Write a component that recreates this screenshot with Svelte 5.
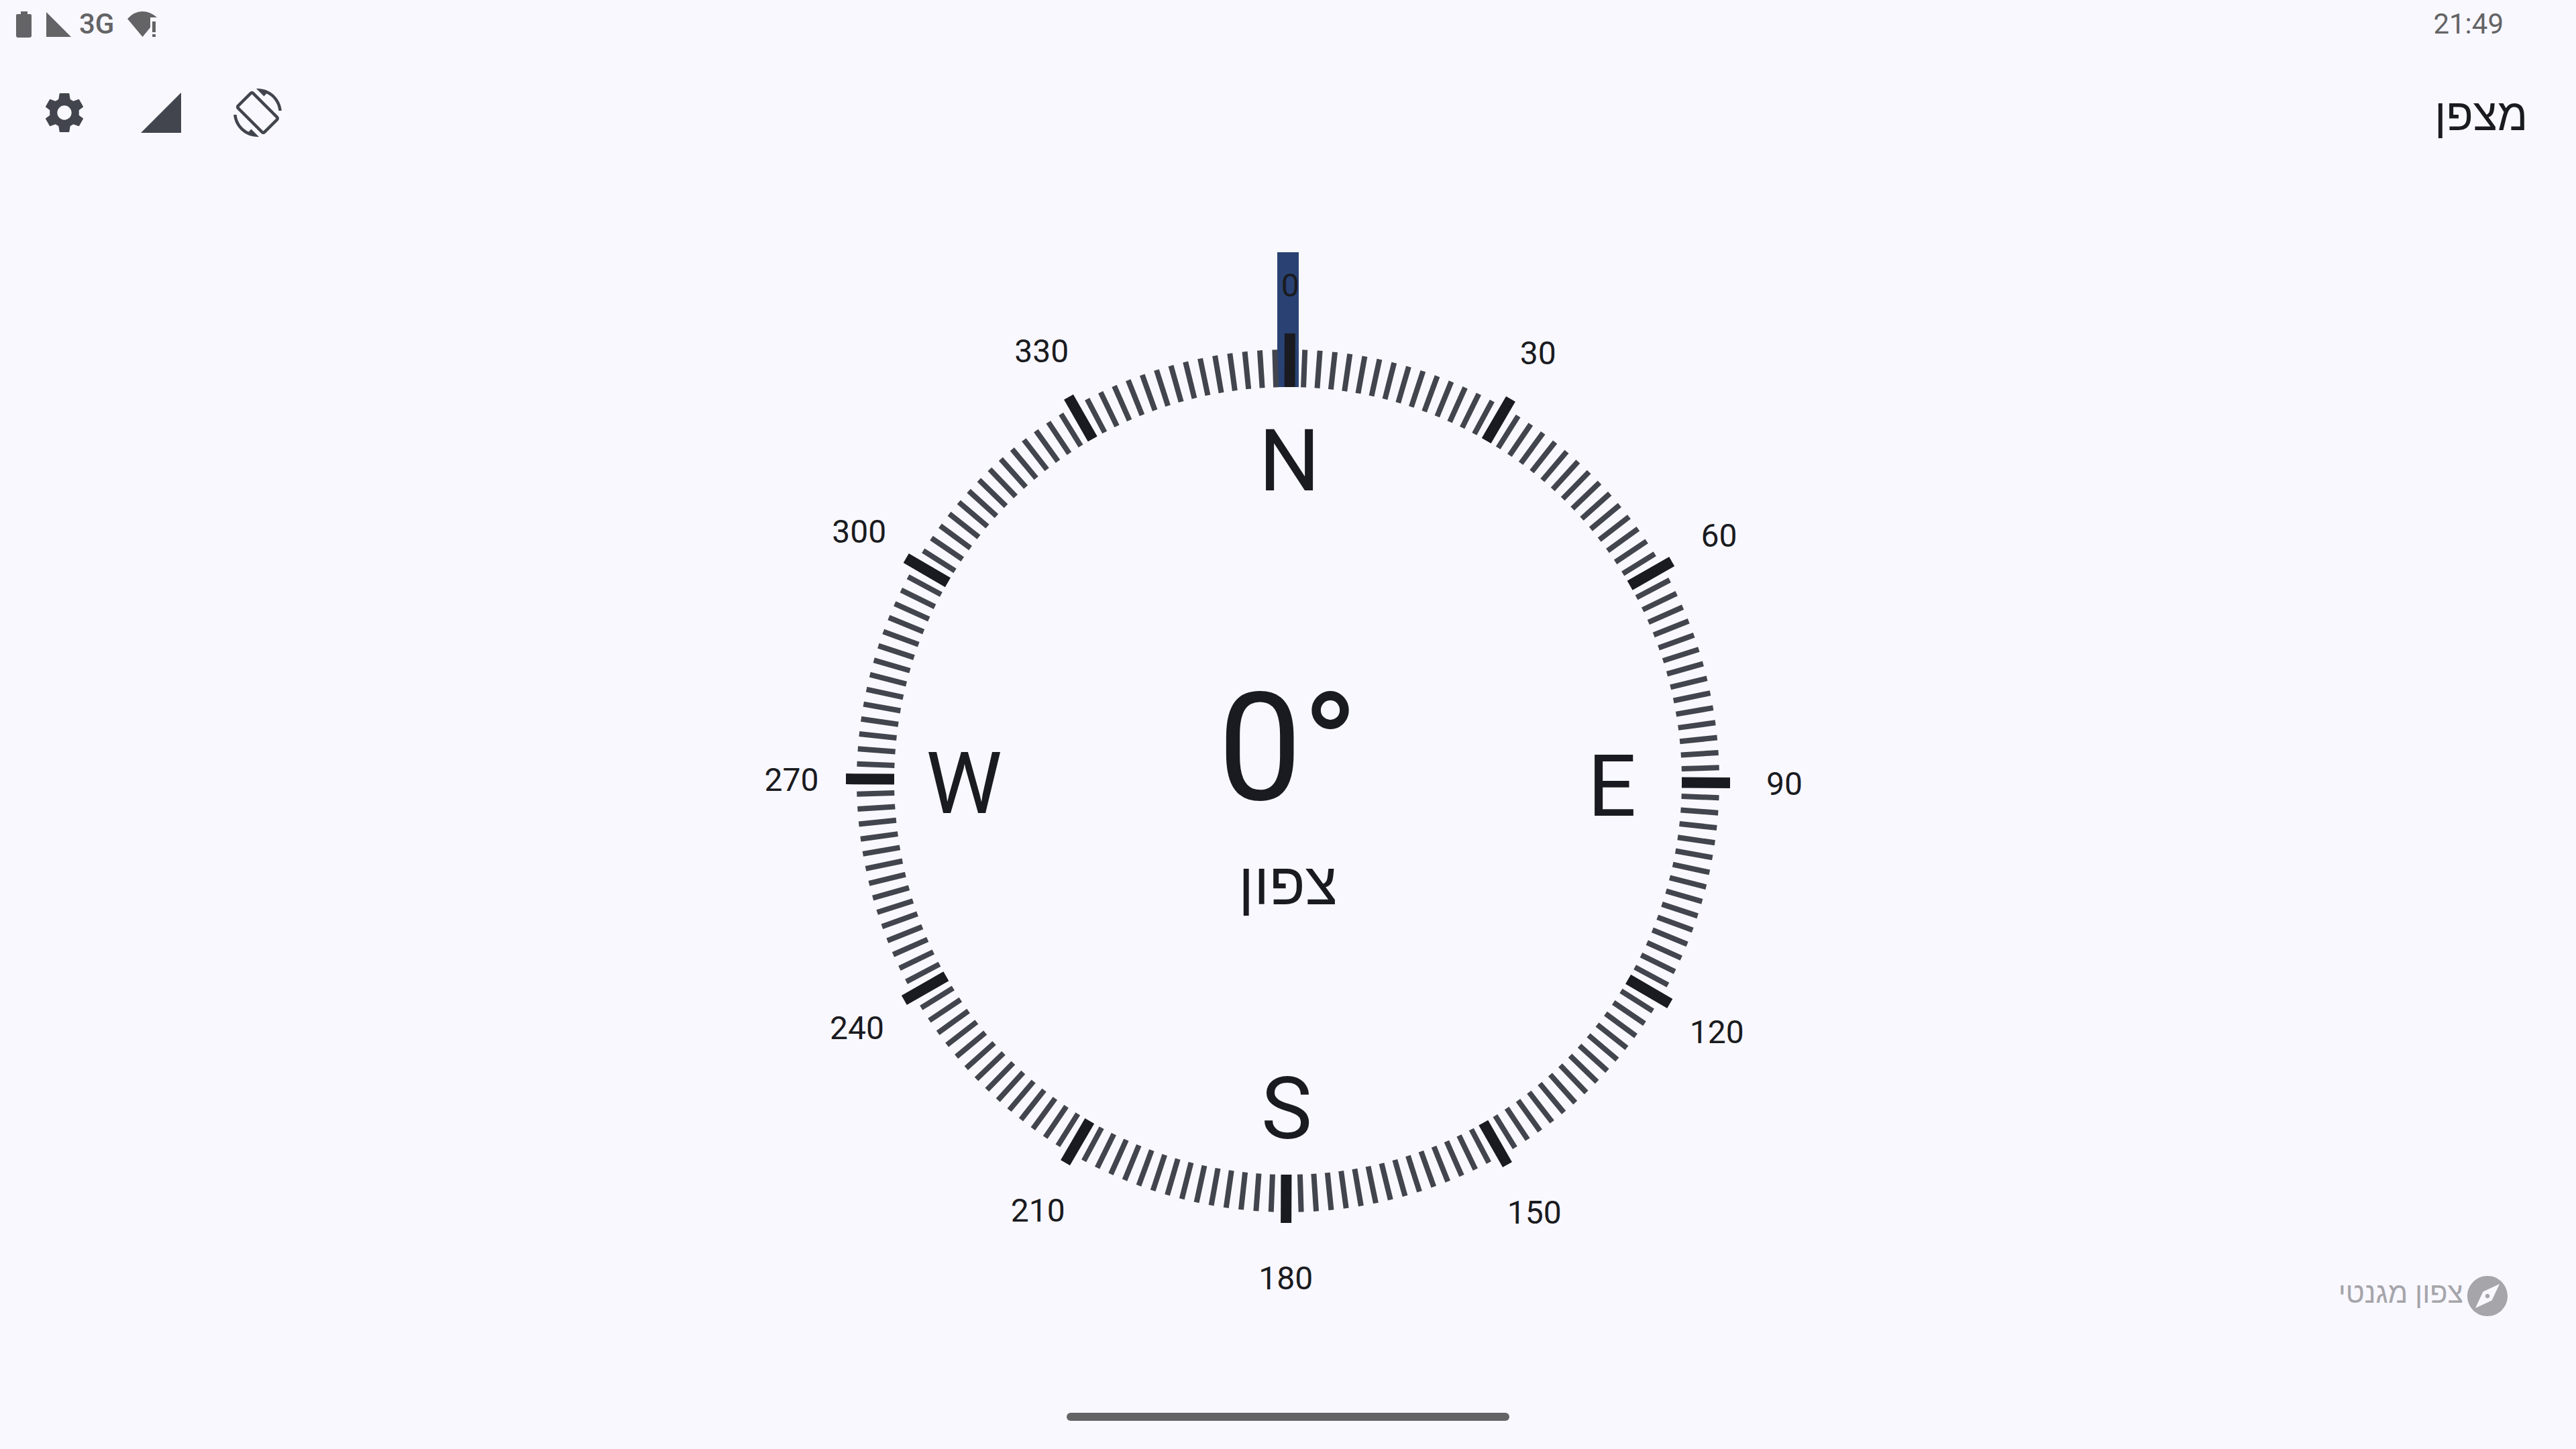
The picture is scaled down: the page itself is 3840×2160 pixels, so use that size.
<script>
  // Device heading offset applied to the dial, in degrees.
  const drift = 0.25;
  const center = 900;

  const point = (deg, r) => {
    const a = ((deg + drift) * Math.PI) / 180;
    return { x: center + r * Math.sin(a), y: center - r * Math.cos(a) };
  };

  const ticks = Array.from({ length: 180 }, (_, i) => {
    const deg = i * 2;
    const major = deg % 30 === 0;
    const outer = deg === 0 ? 667 : major ? 659 : 643;
    return { deg, major, a: point(deg, 587), b: point(deg, outer) };
  });

  const degrees = Array.from({ length: 12 }, (_, i) => ({ label: i * 30, ...point(i * 30, 740) }));
  const cardinals = ['N', 'E', 'S', 'W'].map((label, i) => ({ label, ...point(i * 90, 483) }));
</script>

<div class="screen" dir="rtl" lang="he">
  <div class="status">
    <time>21:49</time>
    <div class="status-icons" dir="ltr">
      <svg class="battery" viewBox="0 0 23 39" aria-hidden="true">
        <path d="M7 0h10v4h4q2 0 2 2v30q0 3-3 3H3q-3 0-3-3V6q0-2 2-2h5z" />
      </svg>
      <svg class="cell" viewBox="0 0 37 37" aria-hidden="true"><path d="M0 0L37 37H0z" /></svg>
      <span class="network">3G</span>
      <svg class="wifi" viewBox="0 0 44 38" aria-hidden="true">
        <path d="M0 11Q10 0 22 0T44 9H34V24L22.500 38zM37 15h5v16h-5zM37 34h5v4h-5z" />
      </svg>
    </div>
  </div>

  <header class="toolbar">
    <h1>מצפן</h1>
    <div class="actions">
      <button aria-label="סיבוב מסך">
        <svg viewBox="0 0 24 24" aria-hidden="true">
          <path d="M16.480 2.520c3.270 1.550 5.610 4.720 5.970 8.480h1.500C23.440 4.840 18.290 0 12 0l-.66.03 3.810 3.810 1.330-1.320zm-6.250-.77c-.59-.59-1.540-.59-2.120 0L1.750 8.110c-.59.59-.59 1.540 0 2.120l12.020 12.020c.59.59 1.540.59 2.120 0l6.360-6.360c.59-.59.59-1.540 0-2.120L10.230 1.750zm4.600 19.440L2.810 9.170l6.360-6.360 12.020 12.020-6.360 6.360zm-7.310.29C4.250 19.940 1.910 16.760 1.550 13H.05C.56 19.160 5.710 24 12 24l.66-.03-3.810-3.810-1.330 1.320z" />
        </svg>
      </button>
      <button aria-label="עוצמת שדה">
        <svg viewBox="0 0 24 24" aria-hidden="true"><path d="M2 22h20V2z" /></svg>
      </button>
      <button aria-label="הגדרות">
        <svg viewBox="0 0 216 216" aria-hidden="true">
          <path
            fill-rule="evenodd"
            d="M88 21h40q2 0 2 2l4 25 14 8 23-8q2-1 3 1l18 31q1 2-1 3l-18 14q1 11 0 22l18 14q2 1 1 3l-18 31q-1 2-3 1l-23-8-14 8-4 25q0 2-2 2H88q-2 0-2-2l-4-25-14-8-23 8q-2 1-3-1l-18-31q-1-2 1-3l18-14q-1-11 0-22L25 83q-2-1-1-3l18-31q1-2 3-1l23 8 14-8 4-25q0-2 2-2zM108 76a32 32 0 1 0 0 64a32 32 0 1 0 0-64z"
          />
        </svg>
      </button>
    </div>
  </header>

  <main>
    <svg class="dial" viewBox="0 0 1800 1800" direction="ltr" role="img" aria-label="0°">
      <rect class="needle" x="884" y="112" width="32" height="201" />
      {#each ticks as t (t.deg)}
        <line class:major={t.major} x1={t.a.x} y1={t.a.y} x2={t.b.x} y2={t.b.y} />
      {/each}
      {#each degrees as d (d.label)}
        <text class="degree" x={d.x} y={d.y + 18}>{d.label}</text>
      {/each}
      {#each cardinals as c (c.label)}
        <text class="cardinal" x={c.x} y={c.y + 50}>{c.label}</text>
      {/each}
      <text class="heading" x="900" y="928">0°</text>
      <text class="direction" x="900" y="1084">צפון</text>
    </svg>

    <div class="north">
      <svg viewBox="0 0 24 24" aria-hidden="true">
        <path d="M12 10.900c-.61 0-1.100.49-1.100 1.100s.49 1.100 1.100 1.100c.61 0 1.100-.49 1.100-1.100s-.49-1.100-1.100-1.100zM12 2C6.480 2 2 6.480 2 12s4.480 10 10 10 10-4.480 10-10S17.520 2 12 2zm2.190 12.190L6 18l3.810-8.190L18 6l-3.810 8.190z" />
      </svg>
      <span>צפון מגנטי</span>
    </div>
  </main>

  <div class="nav"><div class="handle"></div></div>
</div>

<style>
  :global(body) {
    background: #f9f8ff;
  }

  .screen {
    display: flex;
    flex-direction: column;
    min-height: 100vh;
    background: #f9f8ff;
    color: #1a1b20;
    font-family: Roboto, 'Liberation Sans', sans-serif;
  }

  svg {
    display: block;
    fill: currentColor;
  }

  .status {
    display: flex;
    align-items: center;
    justify-content: space-between;
    height: 72px;
    padding: 0 108px 0 24px;
    color: #646466;
    font-size: 42px;
    line-height: 48px;
  }

  .status-icons {
    display: flex;
    align-items: center;
  }

  .battery {
    width: 23px;
    height: 39px;
    margin-right: 22px;
  }

  .cell {
    width: 37px;
    height: 37px;
    margin-right: 12px;
  }

  .network {
    margin-right: 20px;
    font-weight: 500;
  }

  .wifi {
    width: 44px;
    height: 38px;
  }

  .toolbar {
    display: flex;
    align-items: center;
    justify-content: space-between;
    height: 192px;
    padding: 0 72px 0 24px;
  }

  h1 {
    margin: 0;
    padding-top: 8px;
    font-size: 66px;
    font-weight: 400;
    line-height: 96px;
  }

  .actions {
    display: flex;
    color: #42454d;
  }

  button {
    display: grid;
    place-items: center;
    width: 144px;
    height: 144px;
    padding: 0;
    border: 0;
    border-radius: 50%;
    background: none;
    color: inherit;
    cursor: pointer;
  }

  button svg,
  .north svg {
    width: 72px;
    height: 72px;
  }

  main {
    display: grid;
    flex: 1;
  }

  .dial,
  .north {
    grid-area: 1 / 1;
  }

  .dial {
    place-self: center;
    width: min(100vw, calc(100vh - 360px));
  }

  .needle {
    fill: #294273;
  }

  line {
    stroke: #42454d;
    stroke-width: 8px;
  }

  line.major {
    stroke: #1a1b20;
    stroke-width: 16px;
  }

  text {
    text-anchor: middle;
  }

  .degree {
    font-size: 48px;
  }

  .cardinal {
    font-size: 128px;
  }

  .heading {
    font-size: 224px;
  }

  .direction {
    font-size: 88px;
  }

  .north {
    display: flex;
    align-items: center;
    place-self: end start;
    padding: 0 96px 96px 0;
    color: #a5a5aa;
    font-size: 43px;
    line-height: 48px;
  }

  .north span {
    padding-bottom: 10px;
  }

  .nav {
    display: grid;
    place-items: center;
    height: 96px;
  }

  .handle {
    width: 660px;
    height: 12px;
    border-radius: 6px;
    background: #646466;
  }
</style>
